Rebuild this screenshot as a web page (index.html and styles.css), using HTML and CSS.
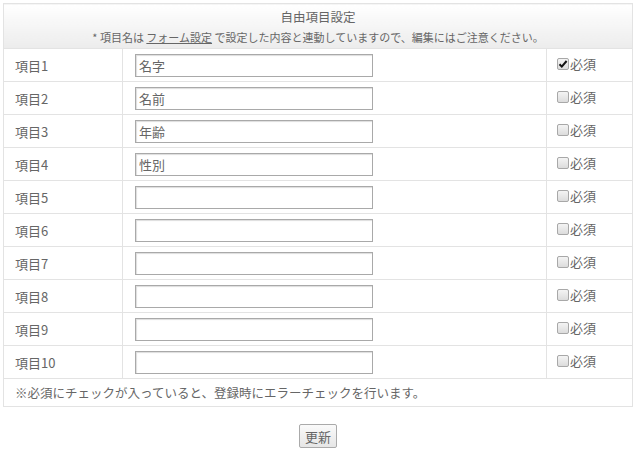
FILE: index.html
```html
<!DOCTYPE html>
<html lang="ja">
<head>
<meta charset="utf-8">
<link rel="stylesheet" href="styles.css">
</head>
<body>
<div class="page">
  <table class="items">
    <colgroup>
      <col class="c1">
      <col class="c2">
      <col class="c3">
    </colgroup>
    <thead>
      <tr>
        <th colspan="3" class="head">
          <div class="title">自由項目設定</div>
          <div class="note">* 項目名は <a href="#" class="link">フォーム設定</a> で設定した内容と連動していますので、編集にはご注意ください。</div>
        </th>
      </tr>
    </thead>
    <tbody>
      <tr><td class="label">項目1</td><td class="field"><input class="txt" type="text" value="名字"></td><td class="req"><span class="cb checked"><svg width="10" height="10" viewBox="0 0 10 10"><path d="M1.5 5.2 L3.8 7.6 L8.6 2" fill="none" stroke="#111" stroke-width="2"/></svg></span>必須</td></tr>
      <tr><td class="label">項目2</td><td class="field"><input class="txt" type="text" value="名前"></td><td class="req"><span class="cb"></span>必須</td></tr>
      <tr><td class="label">項目3</td><td class="field"><input class="txt" type="text" value="年齢"></td><td class="req"><span class="cb"></span>必須</td></tr>
      <tr><td class="label">項目4</td><td class="field"><input class="txt" type="text" value="性別"></td><td class="req"><span class="cb"></span>必須</td></tr>
      <tr><td class="label">項目5</td><td class="field"><input class="txt" type="text" value=""></td><td class="req"><span class="cb"></span>必須</td></tr>
      <tr><td class="label">項目6</td><td class="field"><input class="txt" type="text" value=""></td><td class="req"><span class="cb"></span>必須</td></tr>
      <tr><td class="label">項目7</td><td class="field"><input class="txt" type="text" value=""></td><td class="req"><span class="cb"></span>必須</td></tr>
      <tr><td class="label">項目8</td><td class="field"><input class="txt" type="text" value=""></td><td class="req"><span class="cb"></span>必須</td></tr>
      <tr><td class="label">項目9</td><td class="field"><input class="txt" type="text" value=""></td><td class="req"><span class="cb"></span>必須</td></tr>
      <tr><td class="label">項目10</td><td class="field"><input class="txt" type="text" value=""></td><td class="req"><span class="cb"></span>必須</td></tr>
      <tr><td colspan="3" class="foot">※必須にチェックが入っていると、登録時にエラーチェックを行います。</td></tr>
    </tbody>
  </table>
  <div class="actions"><button class="btn" type="button">更新</button></div>
</div>
</body>
</html>
```
FILE: styles.css
```css
html, body {
  margin: 0;
  padding: 0;
  background: #fff;
}
body {
  font-family: "Noto Sans CJK JP", "Noto Sans", sans-serif;
  font-size: 13px;
  color: #666;
}
.page {
  padding: 3px 3px 0 3px;
}
.items {
  width: 629px;
  border-collapse: collapse;
  table-layout: fixed;
}
.c1 { width: 119px; }
.c2 { width: 424px; }
.c3 { width: 86px; }
.items td, .items th {
  border: 1px solid #e3e3e3;
}
.head {
  height: 44px;
  padding: 0;
  background: linear-gradient(#ffffff, #ececec);
  font-weight: normal;
  text-align: center;
}
.title {
  font-size: 12.5px;
  line-height: 16px;
  padding-top: 2px;
  color: #666;
}
.note {
  font-size: 11px;
  line-height: 16px;
  margin-top: 4px;
  color: #666;
}
.link {
  color: #666;
  text-decoration: underline;
}
.label {
  padding: 0 0 0 11px;
  height: 32px;
}
.field {
  padding: 4px 0 4px 12px;
}
.req {
  padding: 0 0 4px 10px;
  vertical-align: middle;
}
.txt {
  display: block;
  box-sizing: border-box;
  width: 238px;
  height: 23px;
  margin: 0;
  padding: 0 3px;
  border: 1px solid #a9a9a9;
  font-family: "Noto Sans CJK JP", sans-serif;
  font-size: 13px;
  color: #666;
  background: #fff;
  box-shadow: inset 1px 1px 1px #ddd;
}
.cb {
  display: inline-block;
  box-sizing: border-box;
  width: 12px;
  height: 12px;
  border: 1px solid #a8a8a8;
  border-radius: 2px;
  background: linear-gradient(#f4f4f4, #dcdcdc);
  vertical-align: -1px;
  margin-right: 1px;
  position: relative;
}
.cb svg {
  position: absolute;
  left: 0;
  top: 0;
}
.foot {
  height: 27px;
  padding: 0 0 0 11px;
  font-size: 12.5px;
}
.actions {
  display: flex;
  justify-content: center;
  padding-top: 17px;
  padding-left: 1px;
}
.btn {
  width: 38px;
  height: 24px;
  padding: 0;
  font-family: "Noto Sans CJK JP", sans-serif;
  font-size: 13px;
  color: #666;
  border: 1px solid #aaa;
  border-radius: 2px;
  background: linear-gradient(#fafafa, #e6e6e6);
}
```
